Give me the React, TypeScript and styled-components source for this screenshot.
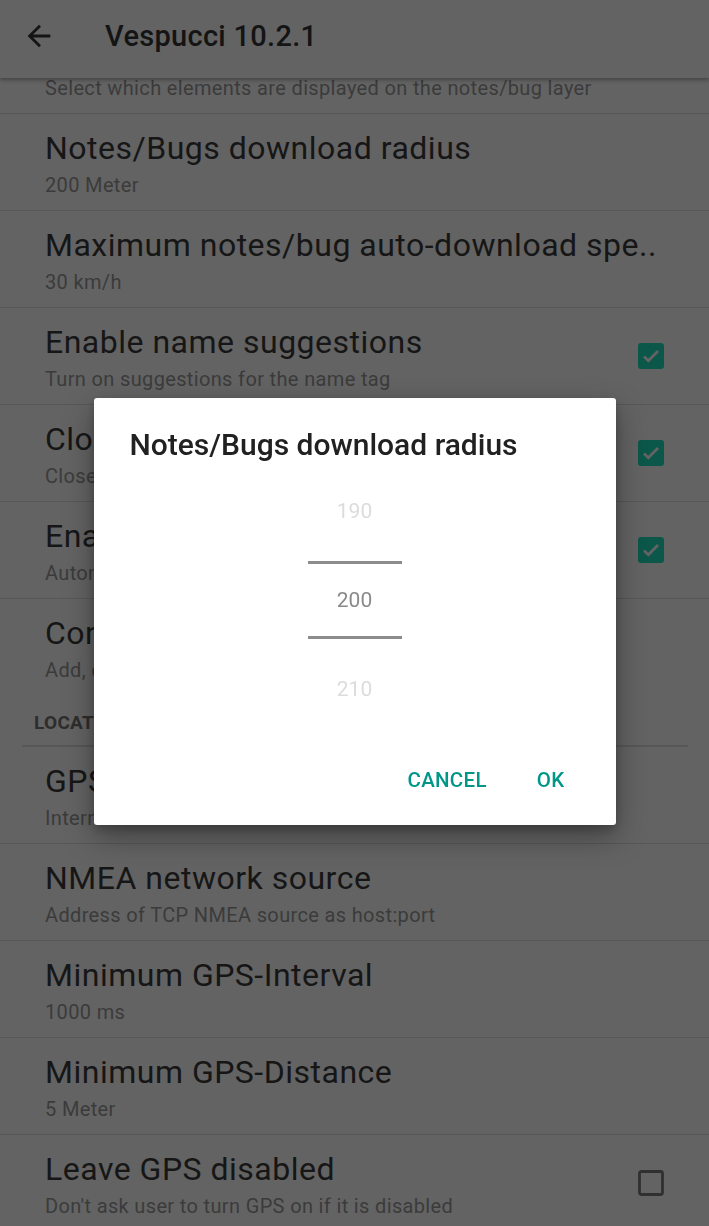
import React from 'react';
import styled, { createGlobalStyle } from 'styled-components';

const GlobalStyle = createGlobalStyle`
  html, body {
    margin: 0;
    padding: 0;
    background: #636363;
  }
  body {
    font-family: Roboto, "Noto Sans", "Liberation Sans", sans-serif;
    overflow: hidden;
  }
`;

const Screen = styled.div`
  width: 709px;
  height: 1226px;
  display: flex;
  flex-direction: column;
  background: #636363;
  overflow: hidden;
`;

const Toolbar = styled.header`
  position: relative;
  z-index: 2;
  flex: 0 0 78px;
  display: flex;
  align-items: center;
  padding: 0 0 6px 22px;
  box-sizing: border-box;
  gap: 49px;
  background: #636363;
  box-shadow: 0 2px 4px rgba(0, 0, 0, 0.32);
`;

const ToolbarTitle = styled.h1`
  margin: 0;
  font-size: 29px;
  font-weight: 500;
  color: #141414;
  letter-spacing: 0.3px;
`;

const Scroller = styled.div`
  flex: 1;
  overflow: hidden;
`;

const List = styled.div`
  /* list is scrolled: the first preference sits under the toolbar */
  margin-top: -61px;
  display: flex;
  flex-direction: column;
`;

const Row = styled.div<{ $last?: boolean }>`
  height: 96px;
  display: flex;
  align-items: center;
  padding: 0 44px 0 45px;
  border-bottom: ${(p) => (p.$last ? '1px solid transparent' : '1px solid #575757')};
`;

const RowText = styled.div`
  flex: 1;
  min-width: 0;
  display: flex;
  flex-direction: column;
  gap: 6px;
  padding-top: 1px;
`;

const RowTitle = styled.div`
  font-size: 32px;
  line-height: 38px;
  letter-spacing: 0.5px;
  color: #161616;
  white-space: nowrap;
  overflow: hidden;
`;

const RowSummary = styled.div`
  font-size: 20px;
  line-height: 24px;
  letter-spacing: 0.35px;
  color: #3b3b3b;
  white-space: nowrap;
  overflow: hidden;
`;

const SectionHeader = styled.div`
  margin: 0 21px 0 22px;
  padding: 16px 0 11px 12px;
  font-size: 19px;
  line-height: 22px;
  font-weight: 700;
  color: #2d2d2d;
  letter-spacing: 0.3px;
  border-bottom: 2px solid #575757;
`;

const BoxSvg = styled.svg`
  flex: 0 0 auto;
  width: 28px;
  height: 28px;
`;

const ArrowSvg = styled.svg`
  width: 34px;
  height: 34px;
  flex: 0 0 auto;
`;

const Scrim = styled.div`
  position: fixed;
  inset: 0;
  z-index: 10;
  display: flex;
  align-items: center;
  justify-content: center;
  padding-bottom: 3px;
`;

const Dialog = styled.div`
  width: 522px;
  height: 427px;
  box-sizing: border-box;
  background: #ffffff;
  border-radius: 3px;
  box-shadow: 0 12px 30px rgba(0, 0, 0, 0.35), 0 4px 10px rgba(0, 0, 0, 0.2);
  padding: 30px 37px 21px 36px;
  display: flex;
  flex-direction: column;
`;

const DialogTitle = styled.h2`
  margin: 0 0 4px;
  font-size: 30px;
  line-height: 34px;
  font-weight: 500;
  color: #212121;
`;

const Picker = styled.div`
  align-self: center;
  width: 94px;
  margin-left: 1px;
  display: flex;
  flex-direction: column;
`;

const PickerItem = styled.div<{ $selected?: boolean }>`
  position: relative;
  height: 89px;
  display: flex;
  align-items: center;
  justify-content: center;
  font-size: 21px;
  color: ${(p) => (p.$selected ? '#8a8a8a' : '#dcdcdc')};

  ${(p) =>
    p.$selected &&
    `
    &::before, &::after {
      content: '';
      position: absolute;
      left: 0;
      right: 0;
      height: 3px;
      background: #8c8c8c;
    }
    &::before { top: 6px; }
    &::after { bottom: 5px; }
  `}
`;

const Actions = styled.div`
  margin-top: auto;
  display: flex;
  justify-content: flex-end;
  gap: 22px;
`;

const TextButton = styled.button`
  height: 48px;
  padding: 0 14px;
  border: none;
  background: transparent;
  font-family: inherit;
  font-size: 20.5px;
  font-weight: 500;
  color: #009688;
  letter-spacing: 0.3px;
  cursor: pointer;
`;

const BackArrow = () => (
  <ArrowSvg viewBox="0 0 24 24" fill="#141414">
    <path d="M20 11H7.83l5.59-5.59L12 4l-8 8 8 8 1.41-1.41L7.83 13H20v-2z" />
  </ArrowSvg>
);

const CheckBox = ({ checked }: { checked: boolean }) =>
  checked ? (
    <BoxSvg viewBox="0 0 28 28">
      <rect x="1" y="1" width="26" height="26" rx="3" fill="#0b5749" />
      <path d="M7 14.5l4.3 4.3L21 9" fill="none" stroke="#636363" strokeWidth="2.8" />
    </BoxSvg>
  ) : (
    <BoxSvg viewBox="0 0 28 28">
      <rect x="2.5" y="2.5" width="23" height="23" rx="2" fill="none" stroke="#303030" strokeWidth="2.8" />
    </BoxSvg>
  );

type Pref = { title: string; summary: string; check?: boolean };

const notesPrefs: Pref[] = [
  { title: 'Notes/Bugs layer filter', summary: 'Select which elements are displayed on the notes/bug layer' },
  { title: 'Notes/Bugs download radius', summary: '200 Meter' },
  { title: 'Maximum notes/bug auto-download spe..', summary: '30 km/h' },
  { title: 'Enable name suggestions', summary: 'Turn on suggestions for the name tag', check: true },
  { title: 'Close changesets', summary: 'Close changesets after upload', check: true },
  { title: 'Enable auto-apply', summary: 'Automatically apply preset changes', check: true },
  { title: 'Connected services', summary: 'Add, edit or remove API entries' },
];

const locationPrefs: Pref[] = [
  { title: 'GPS source', summary: 'Internal GPS' },
  { title: 'NMEA network source', summary: 'Address of TCP NMEA source as host:port' },
  { title: 'Minimum GPS-Interval', summary: '1000 ms' },
  { title: 'Minimum GPS-Distance', summary: '5 Meter' },
  { title: 'Leave GPS disabled', summary: "Don't ask user to turn GPS on if it is disabled", check: false },
];

const PrefRow = ({ pref, last }: { pref: Pref; last?: boolean }) => (
  <Row $last={last}>
    <RowText>
      <RowTitle>{pref.title}</RowTitle>
      <RowSummary>{pref.summary}</RowSummary>
    </RowText>
    {pref.check !== undefined && <CheckBox checked={pref.check} />}
  </Row>
);

const App = () => (
  <>
    <GlobalStyle />
    <Screen>
      <Toolbar>
        <BackArrow />
        <ToolbarTitle>Vespucci 10.2.1</ToolbarTitle>
      </Toolbar>
      <Scroller>
        <List>
          {notesPrefs.map((p, i) => (
            <PrefRow key={p.title} pref={p} last={i === notesPrefs.length - 1} />
          ))}
          <SectionHeader>LOCATION</SectionHeader>
          {locationPrefs.map((p) => (
            <PrefRow key={p.title} pref={p} />
          ))}
        </List>
      </Scroller>
    </Screen>
    <Scrim>
      <Dialog>
        <DialogTitle>Notes/Bugs download radius</DialogTitle>
        <Picker>
          <PickerItem>190</PickerItem>
          <PickerItem $selected>200</PickerItem>
          <PickerItem>210</PickerItem>
        </Picker>
        <Actions>
          <TextButton>CANCEL</TextButton>
          <TextButton>OK</TextButton>
        </Actions>
      </Dialog>
    </Scrim>
  </>
);

export default App;
